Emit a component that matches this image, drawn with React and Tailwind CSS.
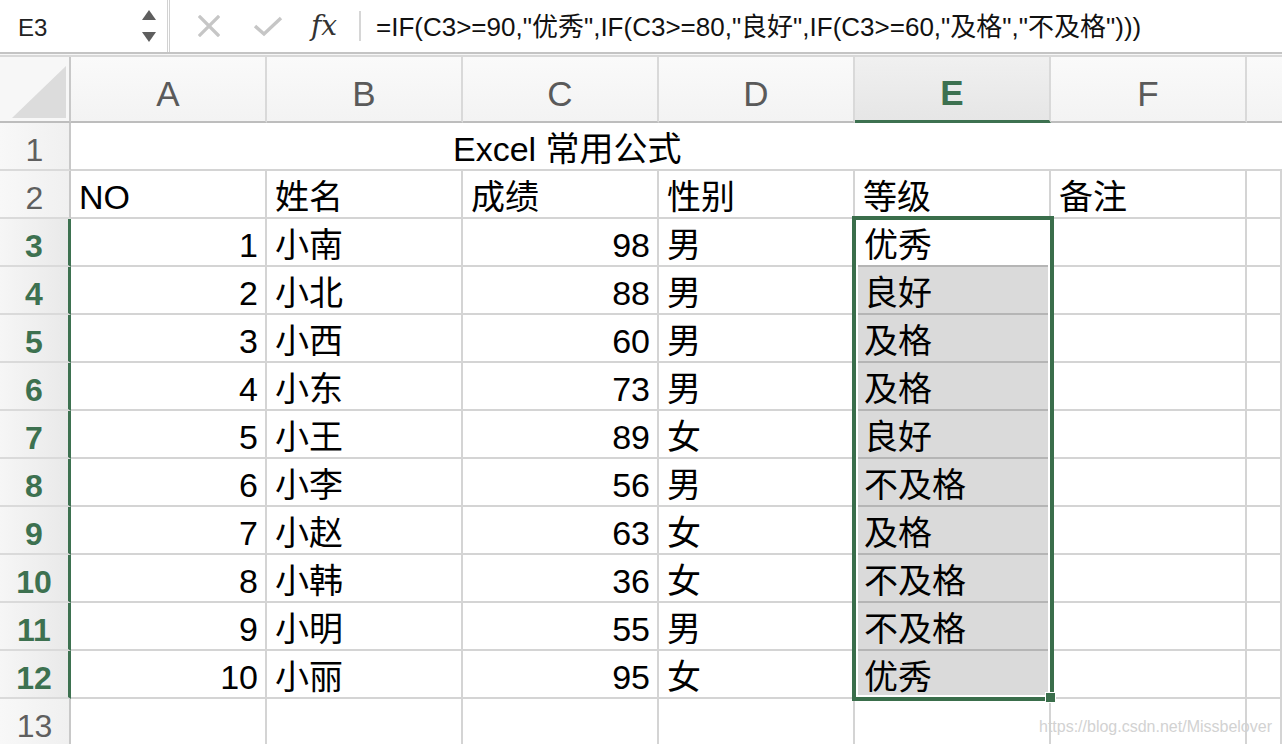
import React from "react";

const rows = [
  [1, "小南", 98, "男", "优秀"],
  [2, "小北", 88, "男", "良好"],
  [3, "小西", 60, "男", "及格"],
  [4, "小东", 73, "男", "及格"],
  [5, "小王", 89, "女", "良好"],
  [6, "小李", 56, "男", "不及格"],
  [7, "小赵", 63, "女", "及格"],
  [8, "小韩", 36, "女", "不及格"],
  [9, "小明", 55, "男", "不及格"],
  [10, "小丽", 95, "女", "优秀"],
];

const FONT = { fontFamily: '"Liberation Sans", "Noto Sans CJK SC", sans-serif' };

const cell = "flex items-end pb-[3px] border-r-2 border-b-2 border-[#d4d4d4] text-[34px] leading-none text-black whitespace-nowrap overflow-hidden";

function RowHead({ n, selected }) {
  return (
    <div
      className={
        "flex items-end justify-center pb-[3px] text-[32px] leading-none border-b-2 border-b-[#dadada] bg-linear-to-r " +
        (selected
          ? "border-r-[3px] border-r-[#3d7150] text-[#3d7150] font-bold from-[#f6f6f6] to-[#e9e9e9]"
          : "border-r-2 border-r-[#c8c8c8] text-[#5f5f5f] from-[#f8f8f8] to-[#f0f0f0]")
      }
    >
      {n}
    </div>
  );
}

function ColHead({ l, selected }) {
  return (
    <div
      className={
        "flex items-end justify-center pb-[10px] text-[35px] leading-none border-r-2 border-r-[#d9d9d9] " +
        (selected
          ? "border-b-[3px] border-b-[#3d7150] text-[#3d7150] font-bold bg-linear-to-b from-[#f0f0f0] to-[#e6e6e6]"
          : "border-b-2 border-b-[#bdbdbd] text-[#5a5a5a] bg-linear-to-b from-[#fafafa] to-[#f3f3f3]")
      }
    >
      {l}
    </div>
  );
}

export default function App() {
  return (
    <div className="w-[1282px] h-[744px] overflow-hidden bg-white relative" style={FONT}>
      {/* Formula bar */}
      <div className="flex h-[52px] bg-white items-center">
        <div className="w-[170px] h-full flex items-center border-r-[3px] border-double border-r-[#d2d2d2] pl-[18px] pr-[10px]">
          <span className="text-[24px] text-[#222] flex-1 pt-[3px]">E3</span>
          <svg width="16" height="34" viewBox="0 0 16 34">
            <polygon points="8,1 15,11 1,11" fill="#5e5e5e" />
            <polygon points="1,23 15,23 8,33" fill="#5e5e5e" />
          </svg>
        </div>
        <div className="w-[77px] flex justify-center">
          <svg width="22" height="22" viewBox="0 0 22 22">
            <path d="M2 2 L20 20 M20 2 L2 20" stroke="#c6c6c6" strokeWidth="3.2" strokeLinecap="square" />
          </svg>
        </div>
        <div className="w-[42px] flex justify-center">
          <svg width="30" height="22" viewBox="0 0 30 22">
            <path d="M2 11 L11 19 L28 3" stroke="#c6c6c6" strokeWidth="3.4" fill="none" />
          </svg>
        </div>
        <div className="w-[70px] flex justify-center">
          <span className="text-[28px] italic text-[#333] leading-none" style={{ fontFamily: '"DejaVu Serif", "Liberation Serif", serif' }}>
            fx
          </span>
        </div>
        <div className="w-[2px] h-[30px] bg-[#d6d6d6]" />
        <div className="pl-[15px] pt-[2px] text-[26px] text-[#111] whitespace-nowrap">
          =IF(C3&gt;=90,"优秀",IF(C3&gt;=80,"良好",IF(C3&gt;=60,"及格","不及格")))
        </div>
      </div>
      <div className="h-[5px] border-t-2 border-t-[#c4c4c4] border-b-2 border-b-[#d8d8d8] bg-[#f6f6f6]" />

      {/* Sheet grid */}
      <div className="relative grid grid-cols-[71px_repeat(6,196px)_1fr] grid-rows-[66px_repeat(13,48px)]">
        {/* corner */}
        <div className="relative bg-[#f7f7f7] border-r-2 border-r-[#c8c8c8] border-b-2 border-b-[#bdbdbd] flex items-end justify-end pr-[3px] pb-[3px]">
          <svg width="54" height="52" viewBox="0 0 54 52">
            <polygon points="54,0 54,52 0,52" fill="#dcdcdc" />
          </svg>
        </div>
        {["A", "B", "C", "D", "E", "F"].map((l) => (
          <ColHead key={l} l={l} selected={l === "E"} />
        ))}
        <div className="border-b-2 border-b-[#bdbdbd] bg-linear-to-b from-[#fafafa] to-[#f3f3f3]" />

        {/* row 1 */}
        <RowHead n={1} />
        <div className="col-span-7 flex items-end pb-[3px] pl-[382px] border-b-2 border-[#d4d4d4] text-[34px] leading-none whitespace-nowrap">
          Excel 常用公式
        </div>

        {/* row 2 */}
        <RowHead n={2} />
        {["NO", "姓名", "成绩", "性别", "等级", "备注"].map((t) => (
          <div key={t} className={cell + " pl-[8px]"}>{t}</div>
        ))}
        <div className={cell} />

        {rows.map((r, i) => (
          <React.Fragment key={i}>
            <RowHead n={i + 3} selected />
            <div className={cell + " justify-end pr-[7px]"}>{r[0]}</div>
            <div className={cell + " pl-[8px]"}>{r[1]}</div>
            <div className={cell + " justify-end pr-[7px]"}>{r[2]}</div>
            <div className={cell + " pl-[8px]"}>{r[3]}</div>
            <div
              className={
                cell +
                " pl-[9px] " +
                (i === 0 ? "" : "bg-[#dadada] border-t-2 border-t-[#b5b5b5] -mt-[2px]")
              }
            >
              {r[4]}
            </div>
            <div className={cell} />
            <div className={cell} />
          </React.Fragment>
        ))}

        {/* row 13 */}
        <RowHead n={13} />
        {[0, 1, 2, 3, 4, 5, 6].map((k) => (
          <div key={k} className={cell} />
        ))}

        {/* selection box E3:E12 */}
        <div className="absolute left-[852px] top-[159px] w-[202px] h-[485px] border-[4px] border-[#3a6e4b] shadow-[inset_0_0_0_2px_#ffffff] pointer-events-none" />
        {/* fill handle */}
        <div className="absolute left-[1045px] top-[635px] w-[11px] h-[11px] bg-[#3a6e4b] border-[1.5px] border-white" />
      </div>

      {/* watermark */}
      <div className="absolute right-[10px] bottom-[9px] text-[16px] text-[#d2d2d2] leading-none">
        https://blog.csdn.net/Missbelover
      </div>
    </div>
  );
}
